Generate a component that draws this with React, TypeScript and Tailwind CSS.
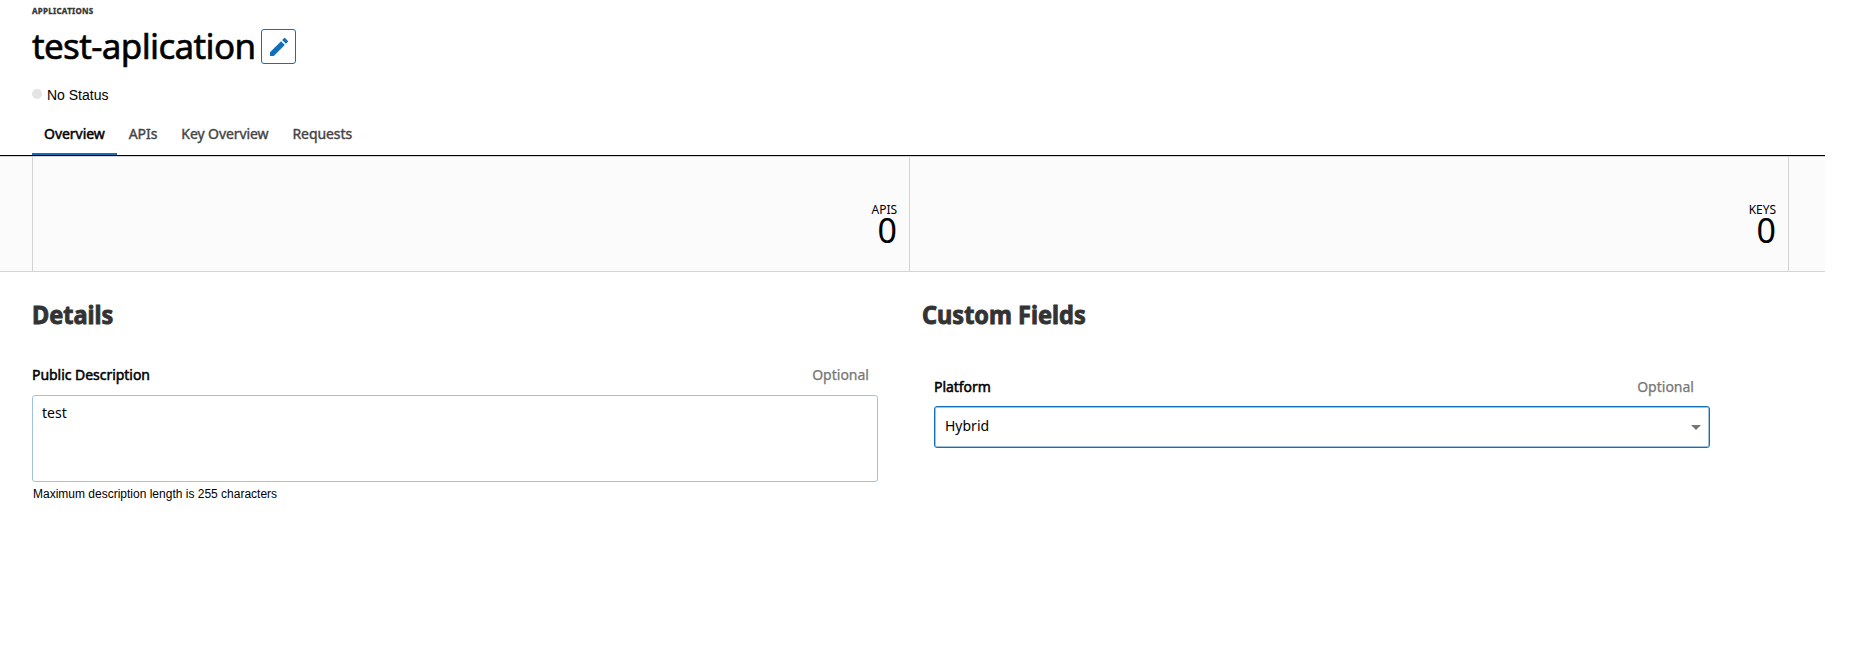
const tabs = ['Overview', 'APIs', 'Key Overview', 'Requests'];

function Stat({ label, value }: { label: string; value: number }) {
  return (
    <div className="flex flex-col items-end border-r border-[#d4d4d4] pt-[45px] pr-3">
      <span className="text-xs leading-4 tracking-[-0.05px]">{label}</span>
      <span className="text-[34px] leading-[25px]">{value}</span>
    </div>
  );
}

function Label({ text }: { text: string }) {
  return (
    <div className="flex justify-between text-sm leading-5">
      <label className="tracking-[-0.04px] [-webkit-text-stroke:0.5px_black]">{text}</label>
      <span className="text-[#767676] [-webkit-text-stroke:0.25px_#767676]">Optional</span>
    </div>
  );
}

function Heading({ text }: { text: string }) {
  return (
    <h2 className="-mt-px origin-left scale-x-[0.94] text-[25px] leading-[30px] font-bold text-[#333] [-webkit-text-stroke:0.9px_#333]">
      {text}
    </h2>
  );
}

export default function App() {
  return (
    <div className="min-h-[647px] w-[1825px] bg-white font-['Noto_Sans',sans-serif] text-black">
      <header className="h-[155px] pl-8">
        <div className="pt-[5px] text-[8px] leading-3 font-bold tracking-[0.28px] text-[#333] [-webkit-text-stroke:0.3px_#333]">APPLICATIONS</div>
        <div className="mt-3 flex h-[35px] items-center gap-[6px]">
          <h1 className="-mt-px text-[35px] leading-9 tracking-[-0.65px] [-webkit-text-stroke:0.6px_black]">test-aplication</h1>
          <button aria-label="Edit" className="flex size-[35px] items-center justify-center rounded-[3px] border border-[#1170b8]">
            <svg viewBox="3 3 18 18" className="size-[18px] fill-[#1170b8]">
              <path d="M3 17.25V21h3.75L17.81 9.94l-3.75-3.75L3 17.25zM20.71 7.04a1 1 0 0 0 0-1.41l-2.34-2.34a1 1 0 0 0-1.41 0l-1.83 1.83 3.75 3.75 1.83-1.83z" />
            </svg>
          </button>
        </div>
        <div className="mt-[22px] flex h-[18px] items-center gap-[5px] font-['Liberation_Sans',sans-serif] text-sm">
          <span className="mb-0.5 size-[10px] rounded-full bg-[#e4e4e4]" />
          <span>No Status</span>
        </div>
        <nav className="mt-[15px] flex h-9 text-sm leading-5">
          {tabs.map((tab, i) => (
            <a
              key={tab}
              className={
                i === 0
                  ? 'h-9 border-b-2 border-[#1170b8] px-3 pt-[5px] tracking-[-0.04px] [-webkit-text-stroke:0.5px_black]'
                  : 'h-9 px-3 pt-[5px] tracking-[-0.08px] text-[#444] [-webkit-text-stroke:0.4px_#444]'
              }
            >
              {tab}
            </a>
          ))}
        </nav>
      </header>
      <section className="h-[117px] border-t border-black">
        <div className="h-[116px] border-y border-[#d4d4d4] bg-[#fbfbfb] pl-8">
          <div className="grid h-full w-[1757px] grid-cols-[877px_879px] border-l border-[#d4d4d4]">
            <Stat label="APIS" value={0} />
            <Stat label="KEYS" value={0} />
          </div>
        </div>
      </section>
      <main className="flex pt-7 pl-8">
        <section className="w-[890px]">
          <Heading text="Details" />
          <div className="mt-9 w-[837px]">
            <Label text="Public Description" />
          </div>
          <textarea
            defaultValue="test"
            className="mt-[10px] block h-[87px] w-[846px] resize-none rounded-[3px] border border-[#9fc3df] px-[9px] py-[7px] text-sm leading-5 outline-none"
          />
          <p className="mt-1 ml-px font-['Liberation_Sans',sans-serif] text-xs">Maximum description length is 255 characters</p>
        </section>
        <section>
          <Heading text="Custom Fields" />
          <div className="mt-12 ml-3 w-[776px]">
            <div className="w-[760px]">
              <Label text="Platform" />
            </div>
            <div className="mt-[9px] flex h-[42px] items-center justify-between rounded-[3px] border border-[#1170b8] pr-2 pl-[10px] text-sm shadow-[inset_0_0_0_1px_#9fc3df]">
              <span className="-mt-0.5">Hybrid</span>
              <svg viewBox="0 0 10 5" className="h-[5px] w-[10px] fill-[#767676]">
                <path d="M0 0h10L5 5z" />
              </svg>
            </div>
          </div>
        </section>
      </main>
    </div>
  );
}
